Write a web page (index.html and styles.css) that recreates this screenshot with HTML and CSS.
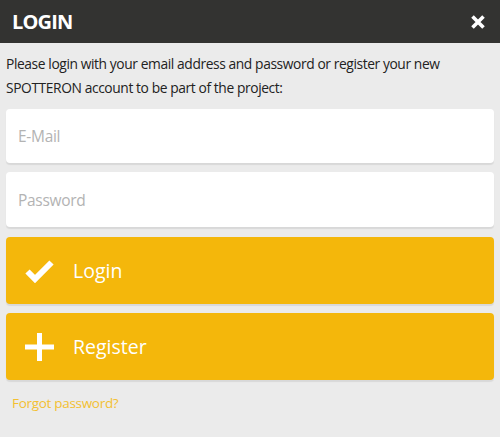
FILE: index.html
```html
<!DOCTYPE html>
<html lang="en">
<head>
<meta charset="utf-8">
<title>Login</title>
<link rel="stylesheet" href="styles.css">
</head>
<body>
<div class="dialog">
  <header class="bar">
    <h1 class="title">LOGIN</h1>
    <button class="close" aria-label="Close">
      <svg width="16" height="16" viewBox="0 0 16 16"><path d="M2.5 2.5 L13.5 13.5 M13.5 2.5 L2.5 13.5" stroke="#fff" stroke-width="3.6" stroke-linecap="butt"/></svg>
    </button>
  </header>
  <main class="content">
    <p class="intro">Please login with your email address and password or register your new SPOTTERON account to be part of the project:</p>
    <input class="field" type="email" placeholder="E-Mail">
    <input class="field field-pw" type="password" placeholder="Password">
    <button class="action">
      <span class="icon">
        <svg width="29" height="24" viewBox="0 0 29 24"><polyline points="2.5,12.5 10,20 26.5,3.5" fill="none" stroke="#fff" stroke-width="6"/></svg>
      </span>
      <span class="label">Login</span>
    </button>
    <button class="action">
      <span class="icon">
        <svg width="29" height="28" viewBox="0 0 29 28"><path d="M0 14 H29 M14.5 0 V28" stroke="#fff" stroke-width="5"/></svg>
      </span>
      <span class="label">Register</span>
    </button>
    <a class="forgot" href="#">Forgot password?</a>
  </main>
</div>
</body>
</html>
```

FILE: styles.css
```css
html, body {
  margin: 0;
  padding: 0;
  background: #ebebeb;
  font-family: "Open Sans", "Noto Sans", sans-serif;
}

.dialog {
  width: 500px;
  min-height: 437px;
  background: #ebebeb;
}

.bar {
  height: 43px;
  background: #333331;
  display: flex;
  align-items: center;
  justify-content: space-between;
  padding: 0 14px 0 12px;
  box-sizing: border-box;
}

.title {
  margin: 0;
  color: #fff;
  font-size: 20px;
  font-weight: 700;
  letter-spacing: -0.8px;
}

.close {
  background: none;
  border: 0;
  padding: 0;
  width: 16px;
  height: 16px;
  display: flex;
  cursor: pointer;
}

.content {
  display: flex;
  flex-direction: column;
  padding: 9px 6px 0 6px;
}

.intro {
  margin: 0 0 9px 0;
  font-size: 13.8px;
  line-height: 24px;
  color: #222;
  letter-spacing: -0.4px;
}

.field {
  height: 54px;
  border: 0;
  border-radius: 4px;
  background: #fff;
  box-shadow: 0 2px 1px rgba(0, 0, 0, 0.08);
  padding: 0 12px;
  font-family: inherit;
  font-size: 15.5px;
  color: #333;
  outline: none;
  margin: 0 0 9px 0;
  letter-spacing: -0.3px;
}

.field-pw {
  height: 55px;
  margin-bottom: 10px;
}

.field::placeholder {
  color: #b3b3b3;
}

.action {
  height: 67px;
  border: 0;
  border-radius: 4px;
  background: #f4b70b;
  box-shadow: 0 2px 1px rgba(0, 0, 0, 0.08);
  display: flex;
  align-items: center;
  padding: 0 0 0 19px;
  margin: 0 0 9px 0;
  color: #fff;
  font-family: inherit;
  font-size: 19.5px;
  cursor: pointer;
}

.icon {
  width: 29px;
  display: flex;
  align-items: center;
  justify-content: center;
  margin-right: 19px;
}

.label {
  line-height: 1;
}

.forgot {
  margin: 5px 0 0 6px;
  color: #f3c030;
  font-size: 13.5px;
  letter-spacing: -0.3px;
  text-decoration: none;
}
```
